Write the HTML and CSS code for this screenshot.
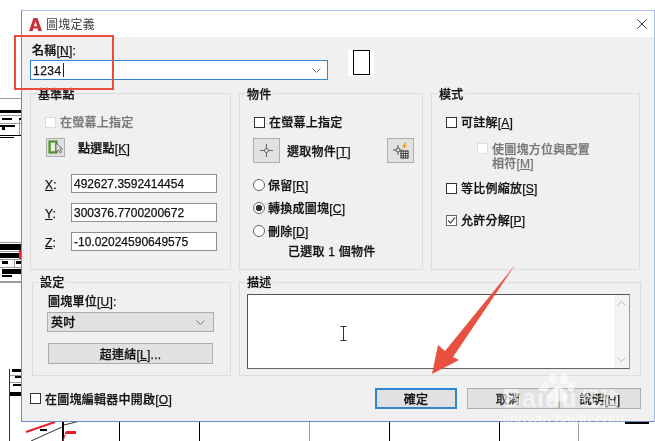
FILE: index.html
```html
<!DOCTYPE html>
<html lang="zh-Hant">
<head>
<meta charset="utf-8">
<title>圖塊定義</title>
<link rel="stylesheet" href="styles.css">
</head>
<body>
<div class="screen">
  <svg class="cad" width="655" height="441" viewBox="0 0 655 441">
    <g fill="#000">
      <rect x="0" y="110" width="21" height="3"/><rect x="2" y="118" width="10" height="2"/><rect x="19" y="118" width="2" height="2"/>
      <rect x="0" y="125" width="15" height="2"/><rect x="2" y="127" width="3" height="3"/><rect x="0" y="135" width="21" height="1"/><rect x="0" y="137" width="14" height="1"/>
      <rect x="0" y="244" width="21" height="6"/><rect x="0" y="253" width="19" height="5"/><rect x="2" y="261" width="6" height="3"/><rect x="16" y="261" width="5" height="3"/>
      <rect x="2" y="269" width="19" height="5"/><rect x="2" y="275" width="10" height="2"/>
      <rect x="12" y="369" width="9" height="3"/><rect x="15" y="376" width="6" height="2"/><rect x="13" y="384" width="8" height="2"/><rect x="10" y="392" width="11" height="4"/>
      <rect x="40" y="429" width="7" height="2"/><rect x="625" y="421" width="24" height="3"/>
      <rect x="62" y="422" width="2" height="19"/><rect x="119" y="421" width="1" height="20"/><rect x="199" y="421" width="1" height="20"/><rect x="389" y="421" width="1" height="20"/><rect x="499" y="421" width="1" height="20"/>
    </g>
    <g fill="#9a9a9a">
      <rect x="0" y="98" width="21" height="1"/><rect x="0" y="115" width="21" height="1"/><rect x="0" y="123" width="21" height="1"/><rect x="19" y="120" width="1" height="15"/>
      <rect x="0" y="242" width="21" height="1"/><rect x="0" y="251" width="21" height="1"/><rect x="0" y="259" width="21" height="1"/><rect x="14" y="260" width="1" height="8"/><rect x="0" y="267" width="21" height="1"/><rect x="0" y="281" width="21" height="2"/>
      <rect x="309" y="421" width="1" height="20"/><rect x="578" y="421" width="1" height="20"/><rect x="10" y="375" width="11" height="1"/><rect x="10" y="382" width="11" height="1"/>
    </g>
    <rect x="9" y="369" width="1" height="72" fill="#333"/>
    <rect x="19" y="250" width="2" height="9" fill="#f02020"/>
    <path d="M26 432 55 422" stroke="#e8202a" stroke-width="2" fill="none"/>
    <path d="M31 441 62 427M64 425 80 421" stroke="#333" stroke-width="1" fill="none"/>
    <rect x="66" y="431" width="10" height="3" fill="#ee1c25"/>
    <path d="M63 441 66 432" stroke="#ee1c25" stroke-width="1" fill="none"/>
  </svg>

  <div class="dialog">
    <div class="titlebar">
      <svg class="app-icon" width="13" height="13" viewBox="0 0 13 13"><path d="M0 13 4.500 0h4L13 13H9.200l-.6-2.500H4.400L3.800 13z" fill="#c8333a"/><path d="M5 8.200h3L6.500 3.500z" fill="#fff"/></svg>
      <span class="title">圖塊定義</span>
      <svg class="close" width="10" height="10" viewBox="0 0 10 10"><path d="M.5.5l9 9M9.500.5l-9 9" stroke="#333" fill="none"/></svg>
    </div>
    <div class="content">
      <div class="name-row">
        <div class="name-field">
          <div class="text-label">名稱[<u>N</u>]:</div>
          <div class="combo"><span class="combo-value">1234</span><span class="caret"></span>
            <svg class="chev" width="9" height="5" viewBox="0 0 9 5"><path d="M.5.5l4 4 4-4" stroke="#777" fill="none"/></svg>
          </div>
        </div>
        <div class="preview"><span class="preview-box"></span></div>
      </div>

      <div class="top-groups">
        <section class="group">
          <div class="legend">基準點</div>
          <div class="group-body body-base">
            <div class="row first"><span class="check disabled"></span><span class="muted">在螢幕上指定</span></div>
            <div class="row pick">
              <span class="icon-btn small">
                <svg width="15" height="15" viewBox="0 0 15 15"><rect x="1" y="1" width="8" height="12" fill="#6fae4b" stroke="#3f7a2a"/><rect x="3" y="3" width="4" height="8" fill="#e5f1dc"/><path d="M8 3v9l2.500-2 1.500 3 1.500-.8-1.500-3 2.500-.2z" fill="#ddd" stroke="#555" stroke-width=".8"/></svg>
              </span>
              <span>點選點[<u>K</u>]</span>
            </div>
            <div class="coords">
              <span class="axis"><u>X</u>:</span><span class="input">492627.3592414454</span>
              <span class="axis"><u>Y</u>:</span><span class="input">300376.7700200672</span>
              <span class="axis"><u>Z</u>:</span><span class="input">-10.02024590649575</span>
            </div>
          </div>
        </section>

        <section class="group">
          <div class="legend">物件</div>
          <div class="group-body body-object">
            <div class="row first indent"><span class="check"></span><span>在螢幕上指定</span></div>
            <div class="row obj-pick">
              <span class="icon-btn wide">
                <svg width="13" height="13" viewBox="0 0 13 13"><circle cx="6.500" cy="6.500" r="2" fill="none" stroke="#666"/><path d="M6.500 0v4.500M6.500 8.500V13M0 6.500h4.500M8.500 6.500H13" stroke="#666"/></svg>
              </span>
              <span>選取物件[<u>T</u>]</span>
              <span class="icon-btn wide push">
                <svg width="17" height="17" viewBox="0 0 17 17"><circle cx="6" cy="8" r="2" fill="none" stroke="#555"/><path d="M6 3v3M6 10v3M1 8h3M8 8h2" stroke="#555"/><path d="M13 0l-3 5h2l-1 3 4-5h-2l1-3z" fill="#f0a020"/><rect x="9" y="9" width="7" height="7" fill="#fff" stroke="#222"/><path d="M9 11.500h7M9 13.800h7M11.300 9v7M13.600 9v7" stroke="#222" stroke-width=".8"/></svg>
              </span>
            </div>
            <div class="row radio-1"><span class="radio"></span><span>保留[<u>R</u>]</span></div>
            <div class="row radio-n"><span class="radio on"></span><span>轉換成圖塊[<u>C</u>]</span></div>
            <div class="row radio-n"><span class="radio"></span><span>刪除[<u>D</u>]</span></div>
            <div class="row selected">已選取 1 個物件</div>
          </div>
        </section>

        <section class="group">
          <div class="legend">模式</div>
          <div class="group-body body-mode">
            <div class="row first"><span class="check"></span><span>可註解[<u>A</u>]</span></div>
            <div class="row sub"><span class="check disabled"></span><span class="muted">使圖塊方位與配置<br>相符[<u>M</u>]</span></div>
            <div class="row uniform"><span class="check"></span><span>等比例縮放[<u>S</u>]</span></div>
            <div class="row explode"><span class="check on"><svg width="9" height="9" viewBox="0 0 9 9"><path d="M1 4.500l2.500 2.500L8 1.500" stroke="#555" stroke-width="1.200" fill="none"/></svg></span><span>允許分解[<u>P</u>]</span></div>
          </div>
        </section>
      </div>

      <div class="lower-groups">
        <section class="group">
          <div class="legend low">設定</div>
          <div class="group-body body-settings">
            <div class="row units">圖塊單位[<u>U</u>]:</div>
            <div class="select"><span class="select-value">英吋</span><svg width="9" height="5" viewBox="0 0 9 5"><path d="M.5.5l4 4 4-4" stroke="#777" fill="none"/></svg></div>
            <div class="btn link">超連結[<u>L</u>]...</div>
          </div>
        </section>
        <section class="group">
          <div class="legend low">描述</div>
          <div class="textarea">
            <div class="scroll">
              <svg width="9" height="5" viewBox="0 0 9 5"><path d="M.5 4.500l4-4 4 4" stroke="#bbb" fill="none"/></svg>
              <svg width="9" height="5" viewBox="0 0 9 5"><path d="M.5.5l4 4 4-4" stroke="#bbb" fill="none"/></svg>
            </div>
          </div>
        </section>
      </div>

      <div class="footer">
        <span class="check"></span><span class="footer-label">在圖塊編輯器中開啟[<u>O</u>]</span>
        <div class="buttons">
          <div class="btn action primary">確定</div>
          <div class="btn action cancel">取消</div>
          <div class="btn action">說明[<u>H</u>]</div>
        </div>
      </div>
    </div>
  </div>

  <svg class="ibeam" width="7" height="15" viewBox="0 0 7 15"><path d="M.5.500h6M3.500.500v14M.5 14.500h6" stroke="#333" fill="none"/></svg>
  <div class="redbox"></div>
  <svg class="arrow" width="655" height="441" viewBox="0 0 655 441"><path d="M515 265 453 357 459 360 432 374 438 345 445 351z" fill="#e8503f"/></svg>

  <div class="watermark">
    <svg class="paw" width="34" height="32" viewBox="0 0 34 32"><g fill="#fff" fill-opacity=".6"><ellipse cx="4" cy="14" rx="3.500" ry="5"/><ellipse cx="12" cy="6" rx="4" ry="5.500"/><ellipse cx="23" cy="6" rx="4" ry="5.500"/><ellipse cx="30" cy="14" rx="3.500" ry="5"/><path d="M17 13c5 0 6 5 9 8 3 4 0 9-5 8-3-.6-5-.6-8 0-5 1-8-4-5-8 3-3 4-8 9-8z"/></g></svg>
    <div class="wm-main"><span class="wm-baidu">Baidu</span><span class="wm-cn">经验</span></div>
    <div class="wm-url">jingyan.baidu.com</div>
  </div>
</div>
</body>
</html>
```

FILE: styles.css
```css
* { box-sizing: border-box; }
html, body { margin: 0; padding: 0; background: #fff; }
body { font: 12px/14px "Liberation Sans", "Noto Sans CJK TC", sans-serif; color: #111; }
u { text-decoration: underline; }

.screen { position: relative; width: 655px; height: 441px; overflow: hidden; background: #fff; }
.cad { position: absolute; left: 0; top: 0; }

.dialog {
  position: absolute; left: 21px; top: 10px; width: 634px; height: 412px;
  background: #f0f0f0;
  border: 1px solid #6b8cc8; border-top-color: #a9c0e6; border-right-color: #a9c0e6;
  font-weight: 500; letter-spacing: .25px; -webkit-text-stroke: .25px currentColor; filter: blur(.3px);
}
.titlebar { display: flex; align-items: center; height: 26px; padding: 0 8px 0 7px; background: #fff; }
.app-icon { margin-right: 4px; }
.title { color: #444; font-weight: 400; -webkit-text-stroke: 0; padding-top: 1px; }
.close { margin-left: auto; margin-right: -1px; }

.content { padding: 6px 13px 0 8px; }

.name-row { display: flex; align-items: flex-end; height: 37px; }
.name-field { width: 298px; }
.text-label { margin-left: 2px; height: 14px; margin-bottom: 3px; line-height: 16px; }
.combo { display: flex; align-items: center; height: 20px; padding: 0 4px 0 2px; background: #fff; border: 1px solid #2f86d6; }
.combo-value { padding-top: 1px; letter-spacing: .5px; }
.caret { width: 1px; height: 14px; background: #222; margin-left: 1px; }
.chev { margin-left: auto; margin-right: 2px; }
.preview { display: flex; justify-content: center; width: 26px; height: 26px; margin: 0 0 4px 20px; background: #fff; }
.preview-box { width: 17px; height: 25px; border: 1px solid #000; background: #fff; }

.top-groups { display: grid; grid-template-columns: 201px 184px 209px; column-gap: 8px; margin-top: 13px; height: 177px; }
.lower-groups { display: grid; grid-template-columns: 199px 402px; column-gap: 8px; margin: 12px 0 0 2px; height: 94px; }
.group { border: 1px solid #dddddd; }
.legend { width: fit-content; height: 14px; margin: -7px 0 0 6px; padding: 0 1px; line-height: 16px; background: #f0f0f0; }
.legend.low { margin-top: -8px; }

.row { display: flex; align-items: center; height: 14px; }
.row > span:not(.check):not(.radio):not(.icon-btn) { padding-top: 2px; }
.row.first { margin-top: 14px; }
.muted { color: #777; }
.check { display: inline-flex; align-items: center; justify-content: center; flex: none; width: 11px; height: 11px; margin-right: 4px; background: #fff; border: 1px solid #333; }
.check.disabled { border-color: #dedede; }
.check.on { border-color: #666; }
.radio { flex: none; width: 12px; height: 12px; margin-right: 3px; border-radius: 50%; background: #fff; border: 1px solid #666; }
.radio.on { background: radial-gradient(circle, #333 0 3px, #fff 3.500px); }
.icon-btn { display: flex; align-items: center; justify-content: center; flex: none; background: #e1e1e1; border: 1px solid #adadad; }
.icon-btn.small { width: 19px; height: 19px; }
.icon-btn.wide { width: 27px; height: 25px; }
.push { margin-left: auto; }

.body-base { padding-left: 14px; }
.row.pick { height: 19px; margin-top: 9px; margin-left: 1px; gap: 13px; }
.coords { display: grid; grid-template-columns: 26px 146px; grid-auto-rows: 19px; row-gap: 10px; align-items: center; margin-top: 17px; }
.axis { padding-top: 2px; }
.input { height: 19px; padding-left: 2px; line-height: 18px; background: #fff; border: 1px solid #8f8f8f; letter-spacing: 0; }

.body-object { padding: 0 8px 0 13px; }
.indent { margin-left: 1px; }
.row.obj-pick { height: 25px; margin-top: 9px; gap: 7px; }
.row.radio-1 { margin-top: 15px; }
.row.radio-n { margin-top: 9px; }
.row.selected { margin: 6px 0 0 35px; padding-top: 2px; }

.body-mode { padding-left: 14px; }
.row.sub { align-items: flex-start; height: 28px; margin: 12px 0 0 31px; }
.row.sub .check { margin-top: 2px; }
.row.uniform { margin-top: 12px; }
.row.explode { margin-top: 18px; }

.body-settings { padding-left: 14px; }
.row.units { margin: 5px 0 0 1px; padding-top: 2px; }
.select { display: flex; align-items: center; justify-content: space-between; width: 167px; height: 20px; margin-top: 4px; padding: 0 8px 0 3px; background: #e1e1e1; border: 1px solid #adadad; }
.select-value { padding-top: 2px; }
.btn { display: flex; align-items: center; justify-content: center; height: 21px; padding-top: 2px; background: #e1e1e1; border: 1px solid #adadad; }
.btn.link { width: 165px; margin: 11px 0 0 1px; }

.textarea { display: flex; justify-content: flex-end; width: 383px; height: 75px; margin: 5px 0 0 7px; background: #fff; border: 1px solid #555; border-right-color: #999; border-bottom-color: #666; }
.scroll { display: flex; flex-direction: column; justify-content: space-between; align-items: center; width: 15px; padding: 6px 0; background: #f4f4f4; }

.footer { display: flex; align-items: center; height: 21px; margin-top: 12px; }
.footer .check { margin-top: -1px; }
.footer-label { margin-top: 3px; }
.buttons { display: flex; margin-left: auto; }
.btn.action { width: 82px; }
.btn.primary { margin-right: 10px; border: 2px solid #2f86d6; }
.btn.cancel { width: 92px; padding-right: 10px; color: #333; }

.ibeam { position: absolute; left: 340px; top: 326px; }
.redbox { position: absolute; left: 14px; top: 35px; width: 100px; height: 55px; border: 2px solid #e74c3c; }
.arrow { position: absolute; left: 0; top: 0; }

.watermark { position: absolute; left: 503px; top: 370px; width: 120px; height: 56px; color: rgba(255, 255, 255, .6); }
.paw { position: absolute; left: 38px; top: 3px; }
.wm-main { position: absolute; left: 0; top: 16px; display: flex; align-items: center; height: 24px; white-space: nowrap; }
.wm-baidu { font: 700 25px/24px "Liberation Sans", sans-serif; letter-spacing: 1px; }
.wm-cn { margin-left: 3px; font: 700 19px/24px "Noto Sans CJK SC", sans-serif; }
.wm-url { position: absolute; left: 0; top: 41px; font: 400 15px/15px "Liberation Sans", sans-serif; white-space: nowrap; }
```
